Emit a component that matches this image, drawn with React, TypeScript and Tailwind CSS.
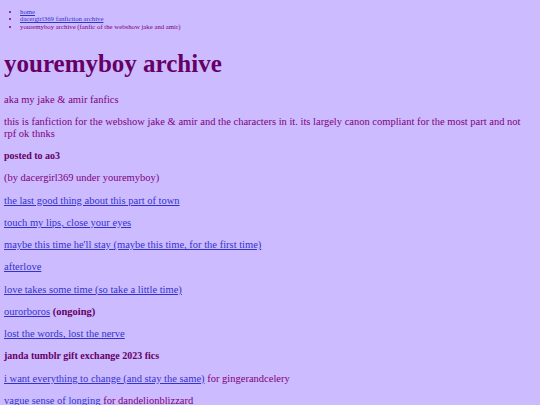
export default function App() {
  const serif = { fontFamily: '"Liberation Serif", "Times New Roman", serif' };
  const link = "text-[#3333cc] underline";
  const p = "my-[10.2px] leading-[12.07px]";
  const h4 = "text-[10px] font-bold text-[#660066] leading-[12.07px] my-[10.2px]";
  return (
    <div style={serif} className="min-h-[405px] bg-[#ccbbff] text-[#800080] text-[10.5px] pl-[4px] pr-[8px] pt-[7.5px] pb-4">
      <ul className="list-disc pl-[16px] text-[6.75px] leading-[7.6px]">
        <li><a href="#" className={link}>home</a></li>
        <li><a href="#" className={link}>dacergirl369 fanfiction archive</a></li>
        <li>youremyboy archive (fanfic of the webshow jake and amir)</li>
      </ul>
      <h1 className="text-[25px] font-bold text-[#660066] leading-[30px] mt-[18.3px] mb-[15px]">youremyboy archive</h1>
      <p className={p}>aka my jake &amp; amir fanfics</p>
      <p className={p}>this is fanfiction for the webshow jake &amp; amir and the characters in it. its largely canon compliant for the most part and not rpf ok thnks</p>
      <h4 className={h4}>posted to ao3</h4>
      <p className={p}>(by dacergirl369 under youremyboy)</p>
      <p className={p}><a href="#" className={link}>the last good thing about this part of town</a></p>
      <p className={p}><a href="#" className={link}>touch my lips, close your eyes</a></p>
      <p className={p}><a href="#" className={link}>maybe this time he'll stay (maybe this time, for the first time)</a></p>
      <p className={p}><a href="#" className={link}>afterlove</a></p>
      <p className={p}><a href="#" className={link}>love takes some time (so take a little time)</a></p>
      <p className={p}><a href="#" className={link}>ourorboros</a> <b className="text-[#660066]">(ongoing)</b></p>
      <p className={p}><a href="#" className={link}>lost the words, lost the nerve</a></p>
      <h4 className={h4}>janda tumblr gift exchange 2023 fics</h4>
      <p className={p}><a href="#" className={link}>i want everything to change (and stay the same)</a> for gingerandcelery</p>
      <p className={p}><a href="#" className={link}>vague sense of longing</a> for dandelionblizzard</p>
    </div>
  );
}
